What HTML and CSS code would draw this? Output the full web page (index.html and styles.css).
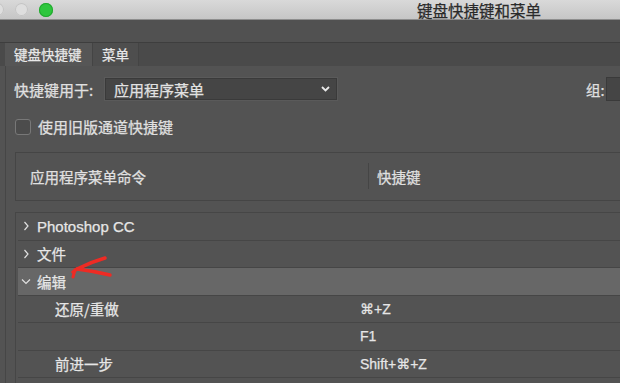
FILE: index.html
```html
<!DOCTYPE html>
<html lang="zh-CN">
<head>
    <meta charset="UTF-8">
    <title>键盘快捷键和菜单</title>
    <link rel="stylesheet" href="styles.css">
</head>
<body>
<div class="window">
    <div class="titlebar">
        <div class="lights">
            <span class="light"></span>
            <span class="light"></span>
            <span class="light green"></span>
        </div>
        <div class="title">键盘快捷键和菜单</div>
    </div>

    <div class="top-gap"></div>

    <!-- tabs -->
    <div class="tabs">
        <div class="tab active">键盘快捷键</div>
        <div class="tab">菜单</div>
    </div>

    <div class="panel">
        <div class="field-row">
            <span class="field-label">快捷键用于:</span>
            <div class="select">
                <span>应用程序菜单</span>
                <svg class="select-arrow" width="9" height="6" viewBox="0 0 9 6"><polyline points="1,1 4.5,4.5 8,1" fill="none" stroke="#e8e8e8" stroke-width="1.8"/></svg>
            </div>
            <span class="group-label">组:</span>
            <div class="group-box"></div>
        </div>

        <div class="check-row">
            <span class="checkbox"></span>
            <span>使用旧版通道快捷键</span>
        </div>

        <div class="header-box">
            <div class="col-name">应用程序菜单命令</div>
            <div class="col-divider"></div>
            <div class="col-key">快捷键</div>
        </div>

        <!-- command list -->
        <div class="list">
            <div class="row">
                <svg class="chev" width="7" height="10" viewBox="0 0 7 10"><polyline points="2,1 5.5,5 2,9" fill="none" stroke="#e0e0e0" stroke-width="1.2"/></svg>
                <span class="latin">Photoshop CC</span>
            </div>
            <div class="row">
                <svg class="chev" width="7" height="10" viewBox="0 0 7 10"><polyline points="2,1 5.5,5 2,9" fill="none" stroke="#e0e0e0" stroke-width="1.2"/></svg>
                <span>文件</span>
            </div>
            <div class="row selected">
                <svg class="chev" width="10" height="7" viewBox="0 0 10 7"><polyline points="1,1.5 5,5.5 9,1.5" fill="none" stroke="#e0e0e0" stroke-width="1.2"/></svg>
                <span>编辑</span>
            </div>
            <div class="row sub">
                <span class="sub-name">还原/重做</span>
                <span class="key">⌘+Z</span>
            </div>
            <div class="row sub">
                <span class="sub-name"></span>
                <span class="key">F1</span>
            </div>
            <div class="row sub">
                <span class="sub-name">前进一步</span>
                <span class="key">Shift+⌘+Z</span>
            </div>
            <div class="row sub"></div>
        </div>
    </div>

    <!-- hand drawn annotation -->
    <svg class="arrow" width="50" height="26" viewBox="0 0 50 26">
        <path d="M37 2 Q23 6 9 13 L5 16" fill="none" stroke="#ee2b24" stroke-width="3.4" stroke-linecap="round"/>
        <path d="M9 13 Q25 15 42 19" fill="none" stroke="#ee2b24" stroke-width="3.4" stroke-linecap="round"/>
        <path d="M7 14 L5 21" fill="none" stroke="#ee2b24" stroke-width="3" stroke-linecap="round"/>
    </svg>
</div>
</body>
</html>
```

FILE: styles.css
```css
body {
    margin: 0;
    background: #535353;
    font-family: "Noto Sans CJK SC", "Liberation Sans", sans-serif;
    color: #e0e0e0;
    font-size: 15px;
    -webkit-text-stroke: 0.25px currentColor;
}
.window {
    position: relative;
    width: 620px;
    height: 383px;
    overflow: hidden;
}

/* title bar */
.titlebar {
    height: 19px;
    border-bottom: 1px solid #8e8e8e;
    background: linear-gradient(#d9d9d9, #c6c6c6);
    display: flex;
    align-items: center;
}
.lights { display: flex; gap: 11px; margin-left: -9px; }
.light {
    width: 13px; height: 13px; border-radius: 50%;
    background: #dedede;
    box-shadow: inset 0 0 0 1px #c4c4c4;
}
.light.green { background: #2ec63d; box-shadow: inset 0 0 0 1px #22a82f; width: 14px; height: 14px; }
.title {
    margin-left: 364px;
    font-size: 15.5px;
    color: #2a2a2a;
    line-height: 18px;
}

.top-gap { height: 22px; background: #515151; }

/* tabs */
.tabs {
    height: 23px;
    border-top: 1px solid #3e3e3e;
    background: #4a4a4a;
    display: flex;
    padding-left: 5px;
}
.tab {
    font-size: 13.5px;
    line-height: 23px;
    padding: 0 9px;
    color: #e8e8e8;
    background: #4e4e4e;
    border-right: 1px solid #444;
}
.tab.active {
    width: 69px;
    background: #565656;
}

.panel {
    margin-left: 5px;
    border-left: 1px solid #464646;
    padding-left: 9px;
    padding-top: 11px;
}

.field-row {
    display: flex;
    align-items: center;
    height: 24px;
}
.field-row > * { flex: none; }
.field-label { width: 91px; margin-left: -1px; }
.select {
    width: 228px;
    height: 20px;
    background: #454545;
    border: 1px solid #3a3a3a;
    box-shadow: 0 0 0 1px #5a5a5a;
    display: flex;
    align-items: center;
    padding-left: 2px;
    color: #e2e2e2;
}
.select span { margin-left: 6px; }
.select-arrow { margin-left: auto; margin-right: 6px; }
.group-label { margin-left: 249px; font-size: 14.5px; }
.group-box {
    margin-left: 1px;
    width: 30px; height: 22px;
    background: #454545; border: 1px solid #3a3a3a;
}

.check-row {
    display: flex;
    align-items: center;
    margin-top: 17px;
    height: 17px;
}
.checkbox {
    flex: none;
    width: 14px; height: 14px;
    border: 1px solid #787878;
    border-radius: 3px;
    background: #4c4c4c;
    margin-right: 7px;
}

.header-box {
    margin-top: 17px;
    height: 47px;
    border: 1px solid #454545;
    border-right: none;
    display: flex;
    align-items: center;
    font-size: 14.5px;
}
.col-name { flex: none; width: 338px; padding-left: 14px; }
.col-divider { flex: none; width: 1px; height: 26px; background: #454545; margin-top: -2px; }
.col-key { padding-left: 8px; }

.list {
    margin-top: 11px;
    border-top: 1px solid #464646;
    border-left: 1px solid #464646;
}
.row {
    margin-left: 2px;
    height: 26.5px;
    border-bottom: 1px solid #464646;
    display: flex;
    align-items: center;
    color: #e6e6e6;
    font-size: 14.5px;
}
.row > * { flex: none; }
.row.selected { background: #676767; }
.chev { width: 12px; margin-left: 2px; margin-right: 5px; }
.latin { font-family: "Liberation Sans", sans-serif; font-size: 15px; }
.sub-name { width: 305px; padding-left: 37px; }
.key { font-family: "Liberation Sans", "DejaVu Sans", sans-serif; font-size: 14px; }

.arrow {
    position: absolute;
    left: 68px;
    top: 256px;
}
```
